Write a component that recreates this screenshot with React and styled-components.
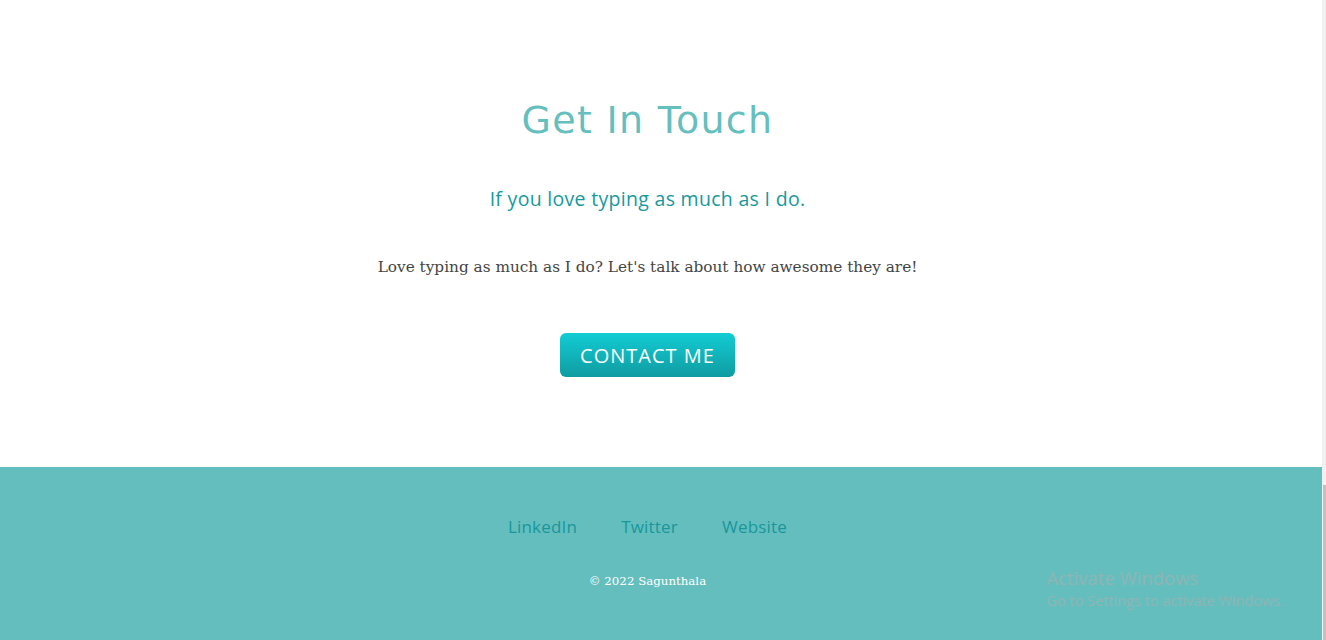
import styled, { createGlobalStyle } from "styled-components";

const GlobalStyle = createGlobalStyle`
  * { box-sizing: border-box; }
  body {
    margin: 0;
    background: #ffffff;
    font-family: "DejaVu Serif", "Liberation Serif", serif;
    overflow: hidden;
  }
`;

const links = ["LinkedIn", "Twitter", "Website"];

export default function App() {
  return (
    <>
      <GlobalStyle />
      <Page>
        <Contact>
          <Title>Get In Touch</Title>
          <Subtitle>If you love typing as much as I do.</Subtitle>
          <Text>Love typing as much as I do? Let's talk about how awesome they are!</Text>
          <ContactButton>CONTACT ME</ContactButton>
        </Contact>
        <Footer>
          <FooterLinks>
            {links.map((l) => (
              <FooterLink key={l} href="#">{l}</FooterLink>
            ))}
          </FooterLinks>
          <Copy>© 2022 Sagunthala</Copy>
        </Footer>
      </Page>
      <Watermark>
        <WatermarkTitle>Activate Windows</WatermarkTitle>
        <WatermarkText>Go to Settings to activate Windows.</WatermarkText>
      </Watermark>
      <ScrollTrack>
        <ScrollThumb />
      </ScrollTrack>
    </>
  );
}

const Page = styled.div`
  width: 1322px;
  min-height: 640px;
  display: flex;
  flex-direction: column;
`;

const Contact = styled.section`
  display: flex;
  flex-direction: column;
  align-items: center;
  padding: 91px 27px 90px 0;
`;

const Title = styled.h1`
  margin: 0;
  font-family: "DejaVu Sans", sans-serif;
  font-weight: 400;
  font-size: 38px;
  line-height: 58px;
  letter-spacing: 1.3px;
  color: #65bfbf;
`;

const Subtitle = styled.h3`
  margin: 38px 0 0;
  font-family: "Open Sans", sans-serif;
  font-weight: 500;
  font-size: 19.5px;
  line-height: 24px;
  letter-spacing: 0.3px;
  color: #17999d;
`;

const Text = styled.p`
  margin: 44px 0 0;
  font-family: "DejaVu Serif", serif;
  font-size: 15.3px;
  line-height: 24px;
  color: #444444;
`;

const ContactButton = styled.button`
  margin-top: 54px;
  width: 175px;
  height: 44px;
  border: none;
  border-radius: 6px;
  background: linear-gradient(to bottom, #13ccd4, #0f9ca1);
  color: #ffffff;
  font-family: "Open Sans", sans-serif;
  font-size: 20px;
  letter-spacing: 1px;
  cursor: pointer;
`;

const Footer = styled.footer`
  flex: 1;
  background: #65bebe;
  display: flex;
  flex-direction: column;
  align-items: center;
  padding: 48px 27px 0 0;
`;

const FooterLinks = styled.nav`
  display: flex;
  gap: 44px;
`;

const FooterLink = styled.a`
  font-family: "Open Sans", sans-serif;
  font-size: 17px;
  line-height: 24px;
  letter-spacing: 0.2px;
  color: #17979b;
  text-decoration: none;
`;

const Copy = styled.p`
  margin: 34px 0 0;
  font-family: "DejaVu Serif", serif;
  font-size: 11.8px;
  line-height: 16px;
  color: #ffffff;
`;

const Watermark = styled.div`
  position: fixed;
  left: 1047px;
  top: 566px;
  font-family: "Open Sans", sans-serif;
  color: #92b4b4;
  pointer-events: none;
`;

const WatermarkTitle = styled.div`
  font-size: 18.5px;
  line-height: 24px;
`;

const WatermarkText = styled.div`
  font-size: 14.5px;
  line-height: 22px;
`;

const ScrollTrack = styled.div`
  position: fixed;
  right: 0;
  top: 0;
  width: 4px;
  height: 640px;
  background: #f1f1f1;
`;

const ScrollThumb = styled.div`
  position: absolute;
  left: 1px;
  top: 485px;
  width: 3px;
  height: 155px;
  background: #c1c1c1;
`;
